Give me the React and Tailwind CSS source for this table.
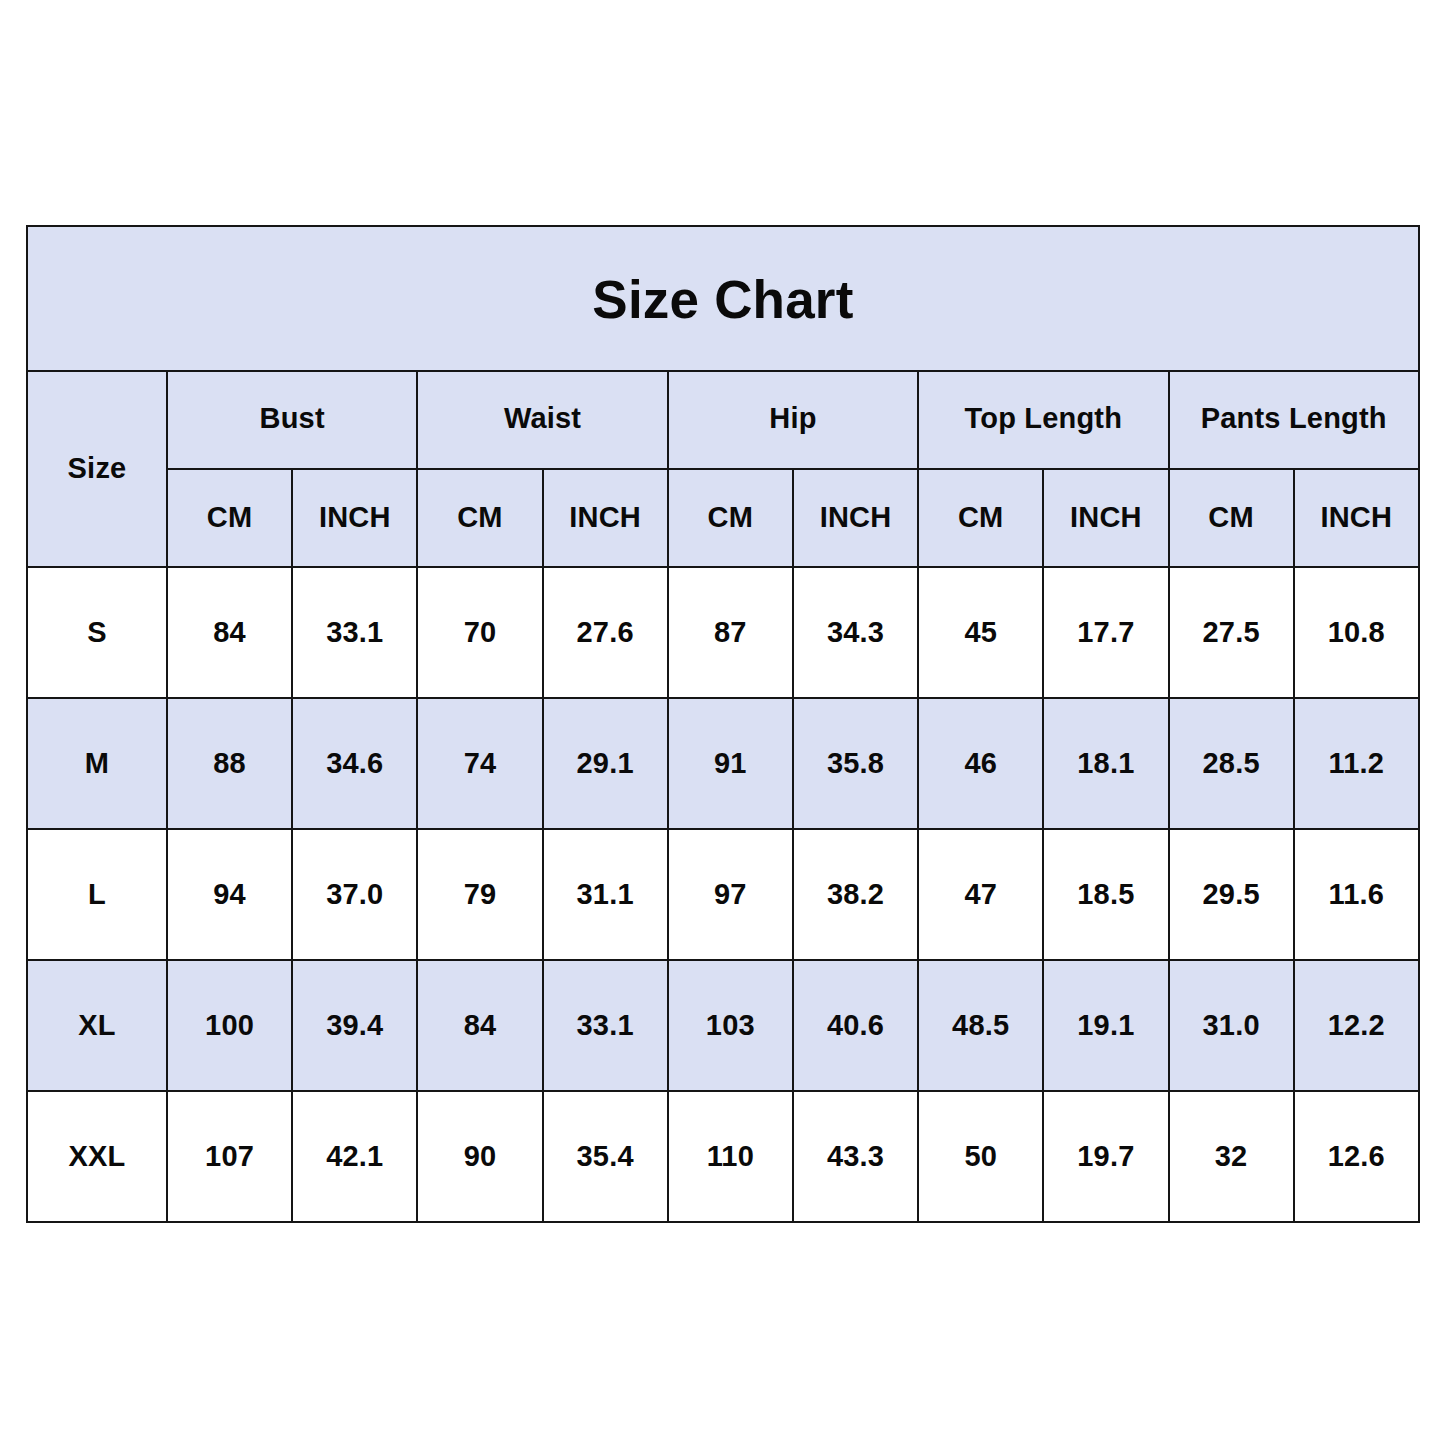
import React from 'react';

const groups = ['Bust', 'Waist', 'Hip', 'Top Length', 'Pants Length'];

const rows = [
  ['S', '84', '33.1', '70', '27.6', '87', '34.3', '45', '17.7', '27.5', '10.8'],
  ['M', '88', '34.6', '74', '29.1', '91', '35.8', '46', '18.1', '28.5', '11.2'],
  ['L', '94', '37.0', '79', '31.1', '97', '38.2', '47', '18.5', '29.5', '11.6'],
  ['XL', '100', '39.4', '84', '33.1', '103', '40.6', '48.5', '19.1', '31.0', '12.2'],
  ['XXL', '107', '42.1', '90', '35.4', '110', '43.3', '50', '19.7', '32', '12.6'],
];

const cell = 'border-2 border-[#151515] text-center align-middle p-0';

export default function App() {
  return (
    <div className="w-[1445px] h-[1445px] bg-white pt-[225px] pl-[26px] font-['Liberation_Sans',Arial,sans-serif] font-bold text-[#0a0a0a]">
      <table className="table-fixed border-collapse w-[1392px] text-[29px] tracking-[0.2px]">
        <colgroup>
          <col className="w-[140px]" />
          {Array.from({ length: 10 }).map((_, i) => (
            <col key={i} className="w-[125.2px]" />
          ))}
        </colgroup>
        <tbody>
          <tr className="h-[145px] bg-[#dae0f3]">
            <td colSpan={11} className={`${cell} text-[53px] pt-[2px]`}>Size Chart</td>
          </tr>
          <tr className="h-[98px] bg-[#dae0f3]">
            <td rowSpan={2} className={cell}>Size</td>
            {groups.map(g => (
              <td key={g} colSpan={2} className={`${cell} pb-[2px]`}>{g}</td>
            ))}
          </tr>
          <tr className="h-[98px] bg-[#dae0f3]">
            {groups.map(g => (
              <React.Fragment key={g}>
                <td className={cell}>CM</td>
                <td className={cell}>INCH</td>
              </React.Fragment>
            ))}
          </tr>
          {rows.map((r, i) => (
            <tr key={r[0]} className={`h-[131px] ${i % 2 === 1 ? 'bg-[#dae0f3]' : 'bg-white'}`}>
              {r.map((v, j) => (
                <td key={j} className={cell}>{v}</td>
              ))}
            </tr>
          ))}
        </tbody>
      </table>
    </div>
  );
}
